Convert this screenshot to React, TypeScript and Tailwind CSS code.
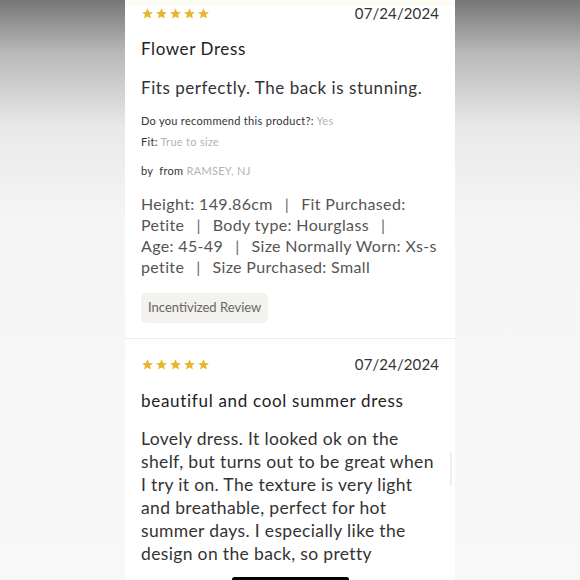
const font = { fontFamily: "Lato, 'Noto Sans', sans-serif" };

function Stars() {
  return (
    <div className="flex gap-[1px]">
      {[0, 1, 2, 3, 4].map((i) => (
        <svg key={i} width="13" height="13" viewBox="0 0 24 24" fill="#e8b52e">
          <path d="M12 2.5l2.9 6.6 7.1.6-5.4 4.7 1.6 7-6.2-3.8-6.2 3.8 1.6-7L2 9.7l7.1-.6z" />
        </svg>
      ))}
    </div>
  );
}

function ReviewHead() {
  return (
    <div className="flex h-5 items-center justify-between">
      <Stars />
      <span className="text-[15px] tracking-[0.1px] text-[#333]">07/24/2024</span>
    </div>
  );
}

function Sep() {
  return <span className="mx-[12px] text-[#666]">|</span>;
}

const attrLines = [
  ["Height: 149.86cm", "Fit Purchased:"],
  ["Petite", "Body type: Hourglass", ""],
  ["Age: 45-49", "Size Normally Worn: Xs-s"],
  ["petite", "Size Purchased: Small"],
];

export default function App() {
  return (
    <div
      className="relative flex h-[580px] w-[580px] justify-center overflow-hidden bg-[linear-gradient(to_bottom,#767676_0%,#b8b8b8_9%,#e9e9e9_22%,#f5f5f5_38%,#f8f8f8_100%)]"
      style={font}
    >
      <div className="relative h-full w-[330px] bg-white">
        {/* sticky header edge */}
        <div className="absolute left-0 right-0 top-0 z-10 h-[6px] bg-[#fdfcf4]" />

        {/* review 1 */}
        <div className="border-b border-[#ececec] px-4 pb-[15px] pt-[3px]">
          <ReviewHead />
          <h3 className="mt-[14px] text-[17px] leading-6 tracking-[0.6px] text-[#222]">Flower Dress</h3>
          <p className="mt-[14px] text-[17px] leading-[26px] tracking-[0.55px] text-[#333]">
            Fits perfectly. The back is stunning.
          </p>
          <p className="mt-3 text-[11px] leading-4 tracking-[0.3px] text-[#333]">
            Do you recommend this product?: <span className="text-[#b3b3b3]">Yes</span>
          </p>
          <p className="mt-[5px] text-[11px] leading-4 tracking-[0.3px] text-[#333]">
            Fit: <span className="text-[#b3b3b3]">True to size</span>
          </p>
          <p className="mt-[13px] text-[11px] leading-4 tracking-[0.3px] text-[#333]">
            by&nbsp; from <span className="text-[#b3b3b3]">RAMSEY, NJ</span>
          </p>
          <div className="mt-[14px] text-[16px] leading-[21px] tracking-[0.35px] text-[#555]">
            {attrLines.map((parts, i) => (
              <div key={i} className="whitespace-nowrap">
                {parts.map((t, j) => (
                  <span key={j}>
                    {j > 0 && <Sep />}
                    {t}
                  </span>
                ))}
              </div>
            ))}
          </div>
          <div className="mt-[16px] inline-flex h-[30px] items-center rounded-[5px] bg-[#f3f2ee] px-[7px] text-[13px] text-[#666]">
            Incentivized Review
          </div>
        </div>

        {/* review 2 */}
        <div className="px-4 pt-[15px]">
          <ReviewHead />
          <h3 className="mt-[15px] text-[17px] leading-6 tracking-[0.7px] text-[#222]">
            beautiful and cool summer dress
          </h3>
          <p className="mt-[14px] text-[17.5px] leading-[23px] tracking-[0.35px] text-[#333]">
            Lovely dress. It looked ok on the shelf, but turns out to be great when I try it on. The
            texture is very light and breathable, perfect for hot summer days. I especially like the
            design on the back, so pretty
          </p>
        </div>

        {/* scroll indicator */}
        <div className="absolute right-[3px] top-[452px] h-[34px] w-[2px] rounded-full bg-[#eeeeee]" />
      </div>

      {/* home indicator */}
      <div className="absolute bottom-[-2px] left-[232px] h-[5px] w-[117px] rounded-full bg-black" />
    </div>
  );
}
